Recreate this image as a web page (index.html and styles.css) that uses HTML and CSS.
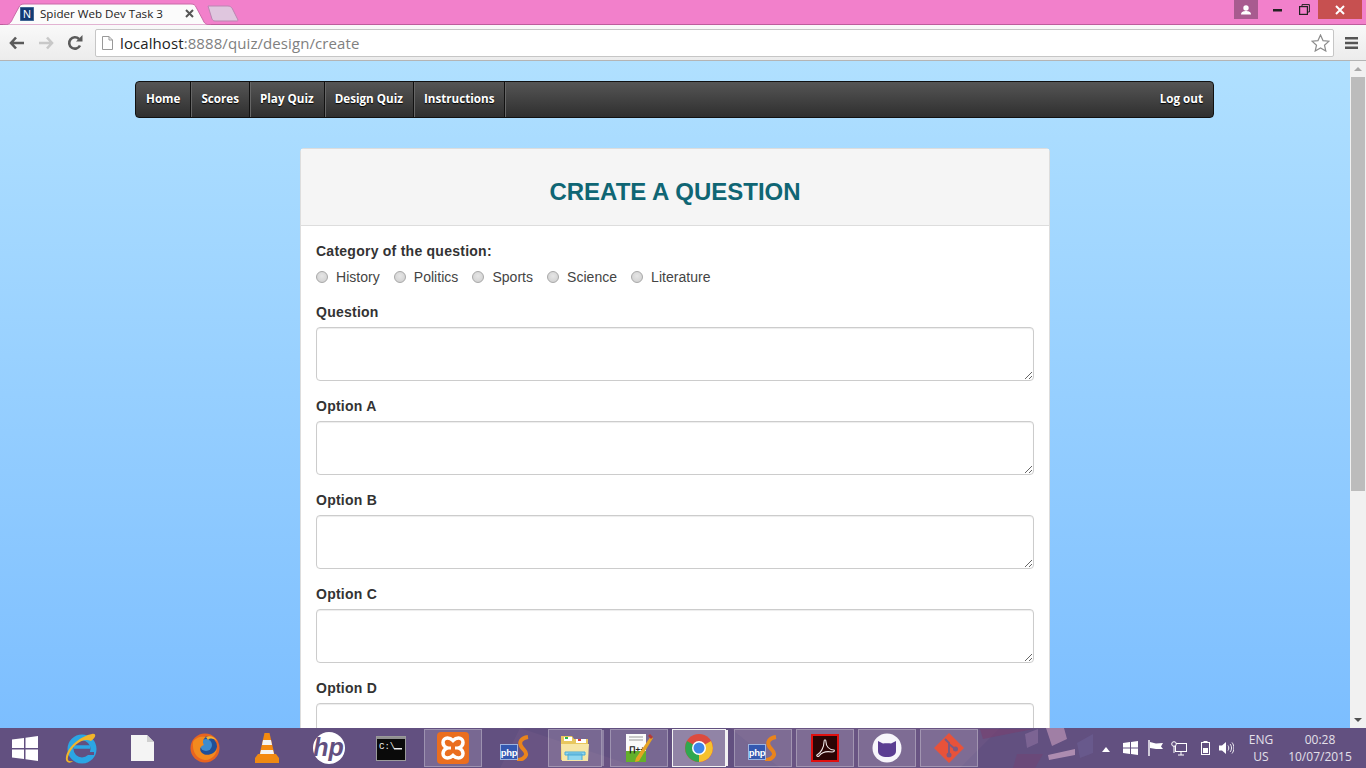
FILE: index.html
```html
<!DOCTYPE html>
<html lang="en">
<head>
<meta charset="utf-8">
<title>Spider Web Dev Task 3</title>
<link rel="stylesheet" href="styles.css">
</head>
<body>
<div class="screen">
  <header class="browser">
    <div class="titlebar">
      <div class="tab">
        <svg class="tab-shape" width="208" height="22" viewBox="0 0 208 22"><path d="M0 22C6 22 8 20 10 15L16 4C17 2 18 1 21 1H188C191 1 192 2 193 4L200 17C201 20 203 22 208 22Z" fill="#fbfbfb" stroke="#c96aa8"/></svg>
        <svg class="favicon" width="14" height="14" viewBox="0 0 14 14"><rect width="14" height="14" fill="#123a73"/><rect x="0" y="0" width="14" height="14" fill="none" stroke="#6c8fb5"/><text x="7" y="11" text-anchor="middle" class="favicon-text">N</text></svg>
        <span class="tab-title">Spider Web Dev Task 3</span>
        <svg class="tab-close" width="9" height="9" viewBox="0 0 9 9"><path d="M1 1L8 8M8 1L1 8" stroke="#555" stroke-width="2"/></svg>
      </div>
      <svg class="newtab" width="32" height="17" viewBox="0 0 32 17"><path d="M1 1H21C23 1 24 2 25 3L31 15C31 16 30 16 29 16H8C6 16 6 15 5 14Z" fill="#dfc6de" stroke="#bb85b2"/></svg>
      <div class="winctl">
        <div class="profile"><svg width="12" height="10" viewBox="0 0 12 10"><circle cx="6" cy="3" r="2.7" fill="#fff"/><path d="M1 9.500C1 6.500 4 6 6 6S11 6.500 11 9.500Z" fill="#fff"/></svg></div>
        <div class="ctl"><svg width="10" height="4" viewBox="0 0 10 4"><rect y="1" width="9" height="2.500" fill="#222"/></svg></div>
        <div class="ctl"><svg width="11" height="11" viewBox="0 0 11 11"><path d="M3 2.500V.6H10.400V8H8.500" fill="none" stroke="#222"/><rect x=".6" y="2.600" width="7.800" height="7.800" fill="none" stroke="#222" stroke-width="1.200"/></svg></div>
        <div class="close"><svg width="10" height="10" viewBox="0 0 10 10"><path d="M1 1L9 9M9 1L1 9" stroke="#fff" stroke-width="2"/></svg></div>
      </div>
    </div>
    <div class="toolbar">
      <svg class="tool" width="16" height="14" viewBox="0 0 16 14"><path d="M7 1.500L2 7L7 12.500M2.500 7H15" fill="none" stroke="#5a5a5a" stroke-width="2.600"/></svg>
      <svg class="tool" width="16" height="14" viewBox="0 0 16 14"><path d="M9 1.500L14 7L9 12.500M13.500 7H1" fill="none" stroke="#c8c8c8" stroke-width="2.600"/></svg>
      <svg class="tool" width="16" height="16" viewBox="0 0 16 16"><path d="M13 10.500A5.700 5.700 0 1 1 12 4" fill="none" stroke="#5a5a5a" stroke-width="2.600"/><path d="M9 6.500H15.500V0Z" fill="#5a5a5a"/></svg>
      <div class="omnibox">
        <svg class="page-icon" width="11" height="14" viewBox="0 0 11 14"><path d="M.5.500H7L10.500 4V13.500H.5Z" fill="#fff" stroke="#999"/><path d="M7 .5V4H10.500" fill="none" stroke="#999"/></svg>
        <span class="url"><span class="url-host">localhost</span>:8888/quiz/design/create</span>
        <svg class="star" width="19" height="18" viewBox="0 0 19 18"><path d="M9.500 1L12 6.600L18 7.200L13.500 11.200L14.800 17L9.500 14L4.200 17L5.500 11.200L1 7.200L7 6.600Z" fill="#fff" stroke="#8c8c8c" stroke-width="1.200"/></svg>
      </div>
      <svg class="menu" width="13" height="12" viewBox="0 0 13 12"><path d="M0 0H13V2.500H0ZM0 4.700H13V7.200H0ZM0 9.400H13V11.900H0Z" fill="#555"/></svg>
    </div>
  </header>

  <div class="viewport">
    <main class="page">
      <nav class="navbar">
        <a class="nav-item">Home</a>
        <a class="nav-item">Scores</a>
        <a class="nav-item">Play Quiz</a>
        <a class="nav-item">Design Quiz</a>
        <a class="nav-item">Instructions</a>
        <a class="nav-item nav-right">Log out</a>
      </nav>
      <section class="card">
        <div class="card-head"><h1>CREATE A QUESTION</h1></div>
        <form class="card-body">
          <div class="group">
            <div class="label">Category of the question:</div>
            <div class="radios">
              <label class="radio"><input type="radio" name="cat">History</label>
              <label class="radio"><input type="radio" name="cat">Politics</label>
              <label class="radio"><input type="radio" name="cat">Sports</label>
              <label class="radio"><input type="radio" name="cat">Science</label>
              <label class="radio"><input type="radio" name="cat">Literature</label>
            </div>
          </div>
          <div class="group"><div class="label">Question</div><textarea></textarea></div>
          <div class="group"><div class="label">Option A</div><textarea></textarea></div>
          <div class="group"><div class="label">Option B</div><textarea></textarea></div>
          <div class="group"><div class="label">Option C</div><textarea></textarea></div>
          <div class="group"><div class="label">Option D</div><textarea></textarea></div>
        </form>
      </section>
    </main>
    <div class="scrollbar">
      <div class="arrow arrow-up"></div>
      <div class="thumb"></div>
      <div class="arrow arrow-down"></div>
    </div>
  </div>

  <footer class="taskbar">
    <svg class="wallpaper" width="1366" height="40" viewBox="0 0 1366 40"><path d="M520 0L640 40H500ZM730 0H1000L960 40H780Z" fill="#8a6a90" opacity=".18"/><path d="M1046 0H1064L1067 11L1052 18Z" fill="#b58fb2" opacity=".75"/><path d="M1048 27L1075 21V27L1049 32Z" fill="#bb97b8" opacity=".85"/><path d="M1025 6L1038 1V15L1027 20Z" fill="#8d72a0" opacity=".6"/><path d="M983 11L1033 1H980Z" fill="#7c3c6c" opacity=".5"/><path d="M1077 15L1093 6V25L1080 30Z" fill="#6d5f94" opacity=".6"/><path d="M1017 26H1043L1035 40H1013Z" fill="#7c3c6c" opacity=".35"/></svg>
    <div class="slot start"><svg width="26" height="25" viewBox="0 0 26 25"><path d="M0 3.500L12 2V12H0ZM13.500 1.800L26 0V12H13.500ZM0 13.500H12V23L0 21.500ZM13.500 13.500H26V25L13.500 23.200Z" fill="#fff"/></svg></div>
    <div class="slot"><svg width="32" height="32" viewBox="0 0 32 32"><circle cx="17" cy="17" r="11.500" fill="none" stroke="#2ba6e4" stroke-width="6"/><path d="M9 15H25" stroke="#2ba6e4" stroke-width="3.500"/><path d="M22 21.500H29" stroke="#625080" stroke-width="3"/><path d="M27 2C31 1 32 5 26 9C18 5 6 14 3 25C2 29 4 30 8 29C5 32 0 31 1 25C3 14 16 4 27 2Z" fill="#f2b52a"/></svg></div>
    <div class="slot"><svg width="24" height="26" viewBox="0 0 24 26"><path d="M0 0H16L23 7V26H0Z" fill="#f4f4f4"/><path d="M16 0V7H23Z" fill="#cfcfcf"/></svg></div>
    <div class="slot"><svg width="30" height="30" viewBox="0 0 30 30"><circle cx="15" cy="15" r="14.500" fill="#e8641f"/><circle cx="17" cy="13.500" r="10" fill="#1f4f97"/><circle cx="16" cy="12" r="6" fill="#3d8cd0"/><path d="M3 9C2 18 6 26 15 27C23 27 27 20 27 15C25 21 17 24 12 20C9 17 10 13 14 12C12 9 13 6 16 4C10 3 5 5 3 9Z" fill="#f28a1e"/><path d="M16 4C20 2 25 4 27 8C23 5 20 5 18 7Z" fill="#f5b335"/></svg></div>
    <div class="slot"><svg width="26" height="32" viewBox="0 0 26 32"><path d="M1 26L4 22H22L25 26V31H1Z" fill="#ef8a12"/><path d="M10.500 1H15.500L21 25C17 28 9 28 5 25Z" fill="#f48a10"/><path d="M9 8H17L18 13H8ZM7 18H19L20 22H6Z" fill="#f4f4f4"/></svg></div>
    <div class="slot"><svg width="32" height="32" viewBox="0 0 32 32"><circle cx="16" cy="16" r="16" fill="#fff"/><text x="15.500" y="24" text-anchor="middle" class="hp-text">hp</text></svg></div>
    <div class="slot"><svg width="30" height="25" viewBox="0 0 30 25"><rect x=".5" y=".5" width="29" height="24" fill="#0a0a0a" stroke="#9a9a9a"/><rect x="1" y="1" width="28" height="2" fill="#8f8f8f"/><text x="3" y="13" class="cmd-text">C:\</text><rect x="18" y="12" width="8" height="1.500" fill="#eee"/></svg></div>
    <div class="slot"><div class="box"><svg width="32" height="32" viewBox="0 0 32 32"><rect width="32" height="32" rx="4" fill="#ea6e1f"/><path d="M16 8.500C14 6.500 12 6 10.500 6C8 6 6 8 6 10.500C6 13 8 15 10 16C8 17 6 19 6 21.500C6 24 8 26 10.500 26C12 26 14 25.500 16 23.500C18 25.500 20 26 21.500 26C24 26 26 24 26 21.500C26 19 24 17 22 16C24 15 26 13 26 10.500C26 8 24 6 21.500 6C20 6 18 6.500 16 8.500Z" fill="none" stroke="#fff" stroke-width="3.500"/><path d="M10 16H14M18 16H22" stroke="#fff" stroke-width="3"/></svg></div></div>
    <div class="slot"><svg width="30" height="26" viewBox="0 0 30 26"><path d="M28 2C21 3 19 7 21 11C23 15 27 16 26 20C25 23 21 25 17 25" fill="none" stroke="#e9841c" stroke-width="4"/><rect x=".5" y="9.500" width="17" height="15" fill="#3458b0" stroke="#9db3e0"/><text x="9" y="21" text-anchor="middle" class="php-text">php</text></svg></div>
    <div class="slot"><div class="box box-stacked"><svg width="30" height="30" viewBox="0 0 30 30"><path d="M1 3H12L14 6H28V27H1Z" fill="#e8c75e"/><path d="M4 4H12V8H4Z" fill="#fff"/><path d="M16 6H26V10H16Z" fill="#fff"/><rect x="5" y="4" width="3" height="2" fill="#2cb34a"/><rect x="18" y="6" width="3" height="2" fill="#d83b3b"/><path d="M1 11H29L28 28H2Z" fill="#f7e6a6"/><path d="M8 27V21H22V27M5 19H25V22H5Z" fill="#8fd6ef" stroke="#4da9d4" stroke-width="1"/></svg></div></div>
    <div class="slot"><div class="box"><svg width="28" height="30" viewBox="0 0 28 30"><path d="M1 1H21V29H1Z" fill="#fafafa"/><path d="M1 18H21V29H1Z" fill="#63b02b"/><path d="M4 4H18M4 7H18" stroke="#999"/><text x="4" y="19" class="npp-text">∏++</text><path d="M26 3L28 5L14 28L10 29L11 25Z" fill="#e6a423"/><path d="M25 1L28 4L26 6L23 3Z" fill="#b33a3a"/></svg></div></div>
    <div class="slot"><div class="box box-active box-stacked"><svg width="30" height="30" viewBox="0 0 30 30"><circle cx="15" cy="15" r="14" fill="#dd4b3e"/><path d="M15 15L27 8A14 14 0 0 1 15 29Z" fill="#f6c12d"/><path d="M15 15L15 29A14 14 0 0 1 3 8Z" fill="#2fa84f"/><circle cx="15" cy="15" r="7" fill="#fff"/><circle cx="15" cy="15" r="5.500" fill="#3e86e8"/></svg></div></div>
    <div class="slot"><div class="box"><svg width="30" height="26" viewBox="0 0 30 26"><path d="M28 2C21 3 19 7 21 11C23 15 27 16 26 20C25 23 21 25 17 25" fill="none" stroke="#e9841c" stroke-width="4"/><rect x=".5" y="9.500" width="17" height="15" fill="#3458b0" stroke="#9db3e0"/><text x="9" y="21" text-anchor="middle" class="php-text">php</text></svg></div></div>
    <div class="slot"><div class="box"><svg width="28" height="28" viewBox="0 0 28 28"><rect x="1" y="1" width="26" height="26" fill="#2b0505" stroke="#e01010" stroke-width="2"/><path d="M6 21C10 19 13 13 13 8C13 5 15 5 15 8C15 12 18 16 23 16C24 17 23 18 21 18C16 17 11 18 8 22C7 23 5 22 6 21Z" fill="none" stroke="#f0e6e6" stroke-width="1.100"/></svg></div></div>
    <div class="slot"><div class="box"><svg width="30" height="30" viewBox="0 0 30 30"><circle cx="15" cy="15" r="14.500" fill="#f7f5fb"/><path d="M6 8L11 10.500C13 10 17 10 19 10.500L24 8V18C24 22 20 24 15 24S6 22 6 18Z" fill="#5b3d92"/></svg></div></div>
    <div class="slot"><div class="box"><svg width="32" height="32" viewBox="0 0 32 32"><path d="M16 1L31 16L16 31L1 16Z" fill="#e8523a"/><path d="M12 7L16 11V21M16 12L22 17" stroke="#7d5a80" stroke-width="2" fill="none"/><circle cx="16" cy="23" r="2.500" fill="#7d5a80"/><circle cx="22.500" cy="17" r="2.500" fill="#7d5a80"/></svg></div></div>
    <div class="tray">
      <svg class="tray-chevron" width="8" height="5" viewBox="0 0 8 5"><path d="M0 5L4 0L8 5Z" fill="#fff"/></svg>
      <svg class="tray-win" width="15" height="14" viewBox="0 0 15 14"><path d="M0 2L7 1V6.500H0ZM8 1L15 0V6.500H8ZM0 7.500H7V13L0 12ZM8 7.500H15V14L8 13Z" fill="#fff"/></svg>
      <svg class="tray-flag" width="16" height="16" viewBox="0 0 16 16"><path d="M1 0V16" stroke="#fff" stroke-width="1.400"/><path d="M2 2L8 3.500L15 3L13 6.500L15 9H8L2 8Z" fill="#fff"/></svg>
      <svg class="tray-net" width="16" height="15" viewBox="0 0 16 15"><rect x="4.500" y="2.500" width="11" height="8" fill="none" stroke="#fff"/><circle cx="3" cy="3" r="2.300" fill="#625080" stroke="#fff"/><path d="M3 5V12M7 14H13M10 10.500V14" stroke="#fff"/></svg>
      <svg class="tray-bat" width="9" height="14" viewBox="0 0 9 14"><rect x=".5" y="1.500" width="8" height="12" fill="none" stroke="#fff"/><rect x="2.500" y="0" width="4" height="2" fill="#fff"/><rect x="2" y="7" width="5" height="5" fill="#fff"/></svg>
      <svg class="tray-vol" width="15" height="14" viewBox="0 0 15 14"><path d="M0 4.500H3L7 1V13L3 9.500H0Z" fill="#fff"/><path d="M9 4.500C10 6 10 8 9 9.500M11 3C13 5 13 9 11 11M13 1.500C15.500 4.500 15.500 9.500 13 12.500" fill="none" stroke="#fff" stroke-width=".9"/></svg>
      <div class="tray-text tray-lang"><span>ENG</span><span>US</span></div>
      <div class="tray-text tray-clock"><span>00:28</span><span>10/07/2015</span></div>
    </div>
  </footer>
</div>
</body>
</html>
```
FILE: styles.css
```css
* { box-sizing: border-box; }
html, body { margin: 0; padding: 0; height: 100%; overflow: hidden; }
body { font-family: "Liberation Sans", Arial, sans-serif; }
.screen { width: 1366px; height: 768px; display: flex; flex-direction: column; overflow: hidden; }

/* Browser chrome */
.browser { flex: 0 0 61px; display: flex; flex-direction: column; }
.titlebar { height: 25px; background: #f280cb; border-bottom: 1px solid #bd5c9d; display: flex; position: relative; }
.tab { position: relative; width: 208px; height: 25px; margin-left: 3px; padding-left: 17px; display: flex; align-items: center; z-index: 1; }
.tab-shape { position: absolute; left: 0; top: 3px; }
.favicon { position: relative; margin-top: 2px; flex: none; }
.favicon-text { font: 11px "Liberation Sans", sans-serif; fill: #fff; }
.tab-title { position: relative; margin: 2px 0 0 6px; font: 11.6px "Open Sans", sans-serif; color: #222; white-space: nowrap; width: 145px; }
.tab-close { position: relative; margin-top: 2px; }
.newtab { margin: 5px 0 0 -4px; flex: none; }
.winctl { margin-left: auto; display: flex; align-items: flex-start; height: 19px; padding-right: 4px; }
.profile { width: 24px; height: 19px; background: #a85b8f; display: flex; align-items: center; justify-content: center; margin-right: 7px; }
.ctl { width: 26px; height: 19px; display: flex; align-items: center; justify-content: center; }
.close { width: 44px; height: 19px; background: #c75050; display: flex; align-items: center; justify-content: center; margin-left: 1px; }
.toolbar { flex: 1; display: flex; align-items: center; padding-left: 9px; background: linear-gradient(#f9f9f9, #ececec); border-bottom: 1px solid #b4b4b4; }
.tool { margin-right: 13px; flex: none; }
.omnibox { width: 1239px; height: 28px; margin-left: -1px; background: #fff; border: 1px solid #c6c6c6; border-radius: 2px; display: flex; align-items: center; padding-left: 6px; flex: none; }
.page-icon { flex: none; }
.url { margin-left: 7px; font: 15px "Open Sans", sans-serif; letter-spacing: .09px; color: #808080; white-space: nowrap; }
.url-host { color: #222; }
.star { margin-left: auto; margin-right: 3px; }
.menu { margin-left: 11px; flex: none; }

/* Viewport */
.viewport { flex: 1; min-height: 0; display: flex; overflow: hidden; }
.page { width: 1350px; background: linear-gradient(#b0e0ff, #7cbeff); padding: 20px 136px 0 135px; overflow: hidden; }
.scrollbar { width: 16px; background: #f1f1f1; display: flex; flex-direction: column; align-items: center; padding-top: 6px; position: relative; }
.arrow { width: 0; height: 0; border-left: 4px solid transparent; border-right: 4px solid transparent; }
.arrow-up { border-bottom: 4px solid #a8a8a8; }
.thumb { width: 14px; height: 414px; background: #bcbcbc; margin-top: 6px; }
.arrow-down { border-top: 4px solid #505050; margin-top: auto; margin-bottom: 6px; }

/* Nav */
.navbar { height: 37px; display: flex; border: 1px solid #111; border-radius: 4px; background: linear-gradient(#555, #2f2f2f); }
.nav-item { padding: 0 10px 2px; display: flex; align-items: center; font: 700 11.65px "Open Sans", sans-serif; color: #fff; text-shadow: 0 1px 1px #000; border-right: 1px solid #111; box-shadow: 1px 0 0 #666; }
.nav-right { margin-left: auto; border-right: 0; box-shadow: none; }

/* Card */
.card { width: 750px; margin: 30px 0 0 165px; background: #fff; border: 1px solid #ddd; border-radius: 4px 4px 0 0; }
.card-head { height: 77px; background: #f5f5f5; border-bottom: 1px solid #ddd; display: flex; align-items: center; justify-content: center; }
.card-head h1 { margin: 10px 0 0; font: 700 24px "Liberation Sans", sans-serif; color: #0f6674; }
.card-body { padding: 15px; }
.group { margin-bottom: 15px; }
.label { height: 20px; margin-bottom: 5px; font: 700 14px/20px "Liberation Sans", sans-serif; letter-spacing: .25px; color: #333; }
.radios { display: flex; gap: 14px; height: 20px; margin-top: 6px; }
.radio { display: flex; align-items: center; font: 14px/20px "Liberation Sans", sans-serif; letter-spacing: .03px; color: #444; }
.radio input { appearance: none; margin: 0 8px 0 0; width: 12px; height: 12px; border: 1px solid #a8a8a8; border-radius: 50%; background: radial-gradient(circle at 50% 40%, #e6e6e6, #cdcdcd); }
textarea { display: block; width: 718px; height: 54px; border: 1px solid #ccc; border-radius: 4px; background: #fff; box-shadow: inset 0 1px 1px rgba(0,0,0,.075); }

/* Taskbar */
.taskbar { flex: 0 0 40px; background: #625080; display: flex; position: relative; overflow: hidden; }
.wallpaper { position: absolute; left: 0; top: 0; }
.slot { width: 62px; height: 40px; display: flex; align-items: center; justify-content: center; position: relative; flex: none; }
.start { width: 50px; }
.box { width: 58px; height: 38px; border: 1px solid rgba(255,255,255,.28); background: rgba(255,255,255,.14); display: flex; align-items: center; justify-content: center; }
.box-stacked { width: 54px; margin-right: 4px; box-shadow: 3px 0 0 -1px rgba(255,255,255,.28); }
.box-active { border-color: #f2f2f2; background: rgba(255,255,255,.3); box-shadow: 3px 0 0 -1px #f2f2f2; }
.hp-text { font: italic 700 25px "Liberation Sans", sans-serif; fill: #625080; }
.cmd-text { font: 9px "Liberation Mono", monospace; fill: #eee; }
.php-text { font: 700 9.5px "Liberation Sans", sans-serif; letter-spacing: -.3px; fill: #fff; }
.npp-text { font: 700 8px "Liberation Sans", sans-serif; fill: #222; }
.tray { flex: 1; position: relative; display: flex; align-items: center; padding-left: 122px; height: 40px; }
.tray-chevron { margin-right: 13px; flex: none; margin-top: 2px; }
.tray-win { margin-right: 10px; flex: none; }
.tray-flag { margin-right: 7px; flex: none; }
.tray-net { margin-right: 14px; flex: none; }
.tray-bat { margin-right: 9px; flex: none; }
.tray-vol { flex: none; }
.tray-text { display: flex; flex-direction: column; align-items: center; font: 12px/17px "Open Sans", sans-serif; color: #e4e0ea; }
.tray-lang { margin-left: 9px; width: 36px; }
.tray-clock { margin-left: 8px; width: 66px; }
```
